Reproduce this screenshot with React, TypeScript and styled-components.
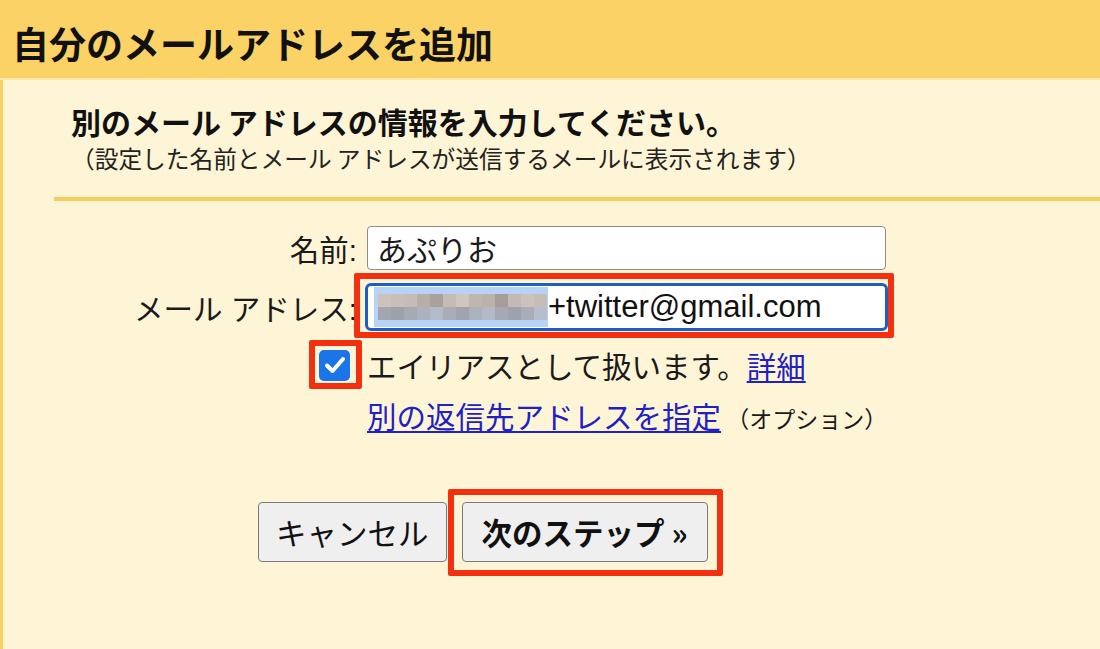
import { createGlobalStyle, styled } from 'styled-components';

const GlobalStyle = createGlobalStyle`
  html, body {
    margin: 0;
    padding: 0;
  }
  body {
    background: #fef5d6;
    color: #161616;
    font-family: "Liberation Sans", "Noto Sans CJK JP", sans-serif;
  }
`;

const S = {
  Page: styled.div`
    display: flex;
    flex-direction: column;
    width: 1100px;
    height: 649px;
    overflow: hidden;
    background: #fef5d6;
  `,

  Header: styled.header`
    display: flex;
    align-items: center;
    height: 80px;
    padding: 8px 0 0 12px;
    box-sizing: border-box;
    background: #fad266;
    border-bottom: 2px solid #fde8a6;
  `,

  Title: styled.h1`
    margin: 0;
    font-family: "Noto Sans CJK JP", sans-serif;
    font-size: 37px;
    font-weight: 700;
    color: #111;
  `,

  Body: styled.main`
    flex: 1;
    border-left: 3px solid #fad266;
  `,

  Intro: styled.div`
    display: flex;
    flex-direction: column;
    margin-top: 21px;
    padding-left: 68px;
  `,

  Subtitle: styled.h2`
    margin: 0;
    line-height: 40px;
    font-family: "Noto Sans CJK JP", sans-serif;
    font-size: 30px;
    font-weight: 700;
    color: #111;
  `,

  Note: styled.p`
    margin: 0;
    line-height: 34px;
    font-family: "Noto Sans CJK JP", sans-serif;
    font-size: 23.7px;
    color: #222;
  `,

  Divider: styled.hr`
    height: 4px;
    margin: 22px 0 0 51px;
    border: none;
    background: #f8cd5c;
  `,

  Form: styled.div`
    display: flex;
    flex-direction: column;
    margin-top: 25px;
  `,

  Row: styled.div<{ $top: number; $height: number }>`
    display: grid;
    grid-template-columns: 354px 519px;
    column-gap: 10px;
    align-items: center;
    height: ${({ $height }) => $height}px;
    margin-top: ${({ $top }) => $top}px;
  `,

  Label: styled.label`
    justify-self: end;
    font-size: 29.5px;
    color: #1a1a1a;
    white-space: nowrap;
  `,

  Field: styled.div<{ $focused?: boolean }>`
    position: relative;
    display: flex;
    align-items: center;
    height: ${({ $focused }) => ($focused ? 48 : 44)}px;
    margin: ${({ $focused }) => ($focused ? '-2px' : '0')};
    padding: 0 ${({ $focused }) => ($focused ? 6 : 9)}px;
    box-sizing: border-box;
    background: #fff;
    border: ${({ $focused }) =>
      $focused ? '3px solid #1d5fc2' : '1px solid #8c8c8c'};
    border-radius: ${({ $focused }) => ($focused ? 6 : 4)}px;
    font-size: 31px;
    color: #111;
    white-space: nowrap;
  `,

  Mosaic: styled.span`
    display: grid;
    grid-template-columns: repeat(13, 13px);
    grid-template-rows: 13px 13px;
    align-content: center;
    height: 40px;
    padding: 0 1px 0 4px;
    background: #b6d3f5;
  `,

  Pixel: styled.span<{ $color: string }>`
    background: ${({ $color }) => $color};
  `,

  Check: styled.span`
    position: relative;
    justify-self: end;
    display: flex;
    align-items: center;
    justify-content: center;
    width: 31px;
    height: 31px;
    margin-right: 7px;
    border-radius: 5px;
    background: #1b74e8;
  `,

  Text: styled.span<{ $size?: number }>`
    font-family: "Noto Sans CJK JP", sans-serif;
    font-size: ${({ $size }) => $size ?? 29.5}px;
    color: #1a1a1a;
    white-space: nowrap;
  `,

  Link: styled.a<{ $size?: number }>`
    font-family: "Noto Sans CJK JP", sans-serif;
    font-size: ${({ $size }) => $size ?? 29.5}px;
    color: #2020c4;
    text-decoration: underline;
    text-underline-offset: 3px;
    white-space: nowrap;
    cursor: pointer;
  `,

  Line: styled.div`
    white-space: nowrap;
  `,

  Buttons: styled.div`
    display: flex;
    gap: 15px;
    margin-top: 74px;
    padding-left: 255px;
  `,

  Button: styled.button<{ $primary?: boolean }>`
    position: relative;
    height: 60px;
    padding: 0 ${({ $primary }) => ($primary ? 19 : 17)}px;
    background: #efefef;
    border: 1px solid #7a7a7a;
    border-radius: 4px;
    font-family: "Noto Sans CJK JP", sans-serif;
    font-size: 30.5px;
    font-weight: ${({ $primary }) => ($primary ? 700 : 400)};
    color: #111;
    white-space: nowrap;
  `,

  // red annotation frame drawn over a control
  Mark: styled.span<{ $t: number; $r: number; $b: number; $l: number }>`
    position: absolute;
    top: ${({ $t }) => $t}px;
    right: ${({ $r }) => $r}px;
    bottom: ${({ $b }) => $b}px;
    left: ${({ $l }) => $l}px;
    border: 6px solid #f2300f;
    border-radius: 2px;
    pointer-events: none;
  `,
};

const MOSAIC = [
  '#cdc3bb', '#c9bfb8', '#c6bcb5', '#b8aea8', '#aaa19c', '#c5bcb5', '#d0c6be',
  '#c0b6b0', '#bcb2ac', '#a69d98', '#c4bab3', '#ccc2bb', '#c7bdb7',
  '#a4a6af', '#9ea0aa', '#a7a9b3', '#abb1be', '#b4bbc8', '#a9adb8', '#a1a4ae',
  '#abb1bd', '#b3b9c5', '#a6a9b3', '#9ea2ac', '#a8adb8', '#b6bdcb',
];

function CheckMark() {
  return (
    <svg width="24" height="24" viewBox="0 0 24 24">
      <path
        d="M4 12.5 L9.5 18 L20 6"
        fill="none"
        stroke="#fff"
        strokeWidth="4"
        strokeLinecap="round"
        strokeLinejoin="round"
      />
    </svg>
  );
}

export default function App() {
  return (
    <>
      <GlobalStyle />
      <S.Page>
        <S.Header>
          <S.Title>自分のメールアドレスを追加</S.Title>
        </S.Header>

        <S.Body>
          <S.Intro>
            <S.Subtitle>別のメール アドレスの情報を入力してください。</S.Subtitle>
            <S.Note>（設定した名前とメール アドレスが送信するメールに表示されます）</S.Note>
          </S.Intro>

          <S.Divider />

          <S.Form>
            <S.Row $top={0} $height={44}>
              <S.Label>名前:</S.Label>
              <S.Field>
                <S.Text $size={30}>あぷりお</S.Text>
              </S.Field>
            </S.Row>

            <S.Row $top={15} $height={44}>
              <S.Label>メール アドレス:</S.Label>
              <S.Field $focused>
                <S.Mosaic>
                  {MOSAIC.map((c, i) => (
                    <S.Pixel key={i} $color={c} />
                  ))}
                </S.Mosaic>
                +twitter@gmail.com
                <S.Mark $t={-13} $r={-9} $b={-10} $l={-14} />
              </S.Field>
            </S.Row>

            <S.Row $top={15} $height={34}>
              <S.Check>
                <CheckMark />
                <S.Mark $t={-10} $r={-12} $b={-8} $l={-10} />
              </S.Check>
              <S.Line>
                <S.Text>エイリアスとして扱います。</S.Text>
                <S.Link>詳細</S.Link>
              </S.Line>
            </S.Row>

            <S.Row $top={16} $height={34}>
              <span />
              <S.Line>
                <S.Link>別の返信先アドレスを指定</S.Link>
                <S.Text $size={23}> （オプション）</S.Text>
              </S.Line>
            </S.Row>
          </S.Form>

          <S.Buttons>
            <S.Button>キャンセル</S.Button>
            <S.Button $primary>
              次のステップ »
              <S.Mark $t={-14} $r={-16} $b={-15} $l={-15} />
            </S.Button>
          </S.Buttons>
        </S.Body>
      </S.Page>
    </>
  );
}
